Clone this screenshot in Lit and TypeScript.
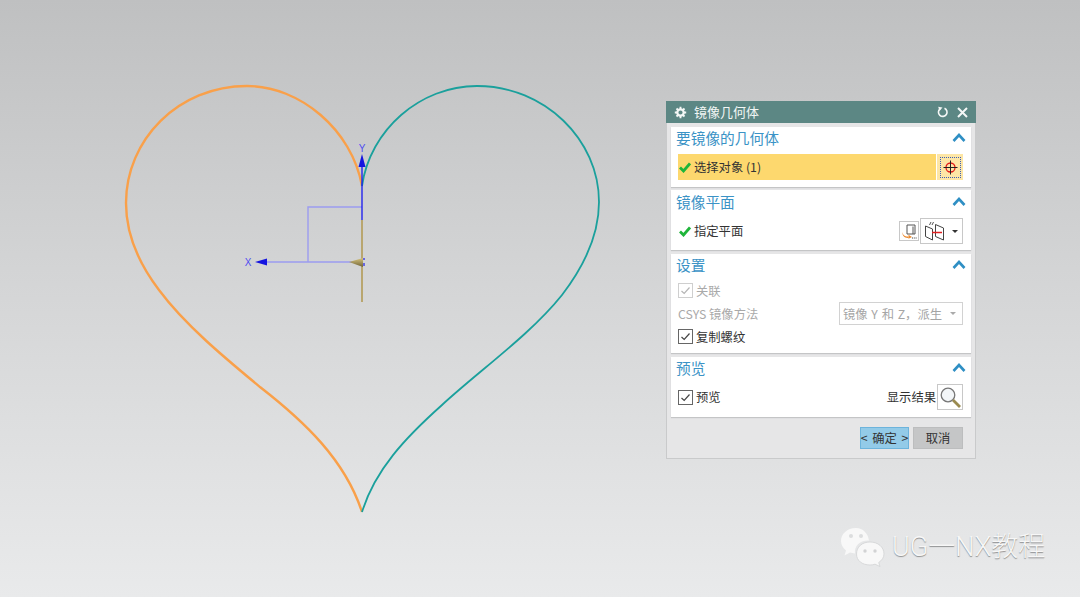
import { LitElement, html, css, svg } from "lit";
import { customElement } from "lit/decorators.js";

const chevron = html`<svg class="chev" width="14" height="9" viewBox="0 0 14 9"><path d="M1.500 8 L7 2 L12.500 8" fill="none" stroke="#2f8fc4" stroke-width="2.600"/></svg>`;
const tick = html`<svg class="tick" width="12" height="11" viewBox="0 0 12 11"><path d="M1 5.500 L4.500 9 L11 1.500" fill="none" stroke="#1fb53a" stroke-width="2.800"/></svg>`;
const box = (off = false) => html`<span class="box ${off ? "off" : ""}"><svg width="13" height="13" viewBox="0 0 13 13"><path d="M2.500 7 L5.200 9.500 L10.500 3.500" fill="none" stroke="${off ? "#b5b5b5" : "#444"}" stroke-width="1.200"/></svg></span>`;

@customElement("app-root")
export class AppRoot extends LitElement {
  static styles = css`
    :host { display: block; width: 1080px; height: 597px; position: relative; overflow: hidden;
      background: linear-gradient(180deg, #bfc0c1 0%, #d3d4d5 45%, #e9eaeb 100%);
      font-family: "Noto Sans CJK SC", "Liberation Sans", sans-serif; color: #333; }
    .canvas { position: absolute; left: 0; top: 0; }
    .axis { font: 10px "Liberation Sans", sans-serif; fill: #4f4ff0; }
    .dialog { position: absolute; left: 666px; top: 101px; width: 310px; height: 358px; box-sizing: border-box;
      background: #e6e6e7; border: 1px solid #c9cacb; border-top: 0; display: flex; flex-direction: column; }
    .head { height: 22px; margin: 0 -1px; background: #5c8784; color: #f2f6f5; font-size: 13px; line-height: 22px;
      display: flex; align-items: center; padding: 0 8px 0 8px; flex: none; }
    .head .name { margin-left: 7px; flex: 1; }
    .head svg { display: block; }
    .head .close { margin-left: 8px; }
    .body { padding: 4px 4px 0; display: flex; flex-direction: column; flex: 1; }
    .sec { background: #fff; box-shadow: 0 1px 1px #c4c5c6; padding: 0 8px 0 7px; flex: none; }
    .s1 { height: 60px; margin-bottom: 3px; }
    .s2 { height: 60px; margin-bottom: 4px; }
    .s3 { height: 99px; margin-bottom: 4px; }
    .s4 { height: 60px; }
    .title { display: flex; align-items: center; justify-content: space-between; height: 27px; color: #3b93c6;
      font-size: 14.700px; margin: 0 -3px 0 -2px; padding-bottom: 6px; box-sizing: border-box; }
    .s2 .title { height: 28px; } .s3 .title { height: 25px; padding-bottom: 5px; }
    .row { display: flex; align-items: center; height: 26px; font-size: 12.300px; }
    .row.short { height: 23px; }
    .tick { margin: 0 3px 0 1px; flex: none; }
    .sel { flex: 1; height: 26px; background: #fdd86e; display: flex; align-items: center; }
    .selbtn { width: 26px; height: 26px; margin-left: 1px; background: #fde6a6; display: flex; align-items: center; justify-content: center; }
    .selbtn .inner { width: 21px; height: 21px; box-sizing: border-box; border: 1px dotted #3d5fb5; display: flex; align-items: center; justify-content: center; }
    .grow { flex: 1; }
    .iconbtn { width: 20px; height: 20px; box-sizing: border-box; border: 1px solid #c8c8c8; display: flex; align-items: center; justify-content: center; margin-right: 1px; }
    .drop { width: 43px; height: 26px; box-sizing: border-box; border: 1px solid #c8c8c8; display: flex; align-items: center; padding-left: 3px; }
    .drop .car { margin-left: 7px; }
    .box { width: 15px; height: 15px; box-sizing: border-box; border: 1px solid #666; display: inline-flex; align-items: center; justify-content: center; margin-right: 3px; flex: none; }
    .box.off { border-color: #cfcfcf; }
    .dis { color: #a9a9a9; }
    .combo { width: 124px; height: 23px; box-sizing: border-box; border: 1px solid #d2d2d2; color: #a5a5a5; display: flex; align-items: center; justify-content: space-between; padding: 0 6px 0 3px; font-size: 12.300px; word-spacing: 1px; white-space: nowrap; }
    .car { width: 0; height: 0; border-left: 3px solid transparent; border-right: 3px solid transparent; border-top: 3px solid #333; flex: none; }
    .combo .car { border-top-color: #aaa; }
    .mag { width: 26px; height: 26px; box-sizing: border-box; border: 1px solid #c8c8c8; margin-left: 1px; display: flex; align-items: center; justify-content: center; }
    .foot { display: flex; justify-content: flex-end; gap: 4px; padding: 10px 8px 0 0; }
    .btn { height: 22px; box-sizing: border-box; display: flex; align-items: center; justify-content: center; font-size: 12.300px; }
    .ok { width: 49px; background: #93cbe8; border: 1px solid #6db4dc; word-spacing: 2px; white-space: nowrap; }
    .cancel { width: 50px; background: #c5c6c7; border: 1px solid #bcbdbe; }
    .mark { position: absolute; left: 840px; top: 527px; display: flex; align-items: center; color: #fff; }
    .mark .txt { margin-left: 7px; font-size: 27px; font-family: "Roboto", "Noto Sans CJK SC", sans-serif; font-weight: 300; line-height: 40px;
      text-shadow: 0 1px 1px #8e8f90; white-space: nowrap; color: #f7f7f7; }
  `;

  private scene() {
    return svg`
      <svg class="canvas" width="1080" height="597" viewBox="0 0 1080 597">
        <defs><linearGradient id="cone" x1="0" y1="0" x2="0" y2="1"><stop offset="0" stop-color="#d8c57e"/><stop offset="1" stop-color="#6f6338"/></linearGradient></defs>
        <path d="M362 186 C352 130 300 86 247 86 C178 86 126 140 126 203 C126 235 140 265 159 290 C185 325 225 358 260 387 C305 422 345 460 362 512" fill="none" stroke="#f9a04a" stroke-width="2.400"/>
        <path d="M362 186 C370 130 420 86 477 86 C545 86 599 140 599 202 C599 235 585 265 562 295 C530 335 480 370 442 405 C405 438 375 470 362 512" fill="none" stroke="#1aa09c" stroke-width="1.800"/>
        <path d="M362 220 V302" stroke="#b9a66f" stroke-width="2"/>
        <path d="M362 207 H308 V262 M267 262 H352" fill="none" stroke="#9c9cf0" stroke-width="1.400"/>
        <path d="M362 166 V220" stroke="#1616f0" stroke-width="1.300"/>
        <path d="M362 154 L365.500 167 H358.500 Z" fill="#1414e0"/>
        <path d="M255 262 L267 258.500 V265.500 Z" fill="#1414e0"/>
        <path d="M349 262 L363 258 V267 Z" fill="url(#cone)"/>
        <path d="M364 258 V260 M364 263 V266" stroke="#3a3ae8" stroke-width="1.400"/>
        <text class="axis" x="362" y="152" text-anchor="middle">Y</text>
        <text class="axis" x="248" y="266" text-anchor="middle">X</text>
      </svg>`;
  }

  render() {
    return html`
      ${this.scene()}
      <div class="dialog">
        <div class="head">
          <svg width="13" height="13" viewBox="0 0 13 13"><circle cx="6.500" cy="6.500" r="3.200" fill="none" stroke="#f4f7f6" stroke-width="2.200"/><path d="M6.500 .8V3M6.500 10V12.200M.8 6.500H3M10 6.500H12.200M2.500 2.500L4 4M9 9L10.500 10.500M2.500 10.500L4 9M9 4L10.500 2.500" stroke="#f4f7f6" stroke-width="1.900"/></svg>
          <span class="name">镜像几何体</span>
          <svg width="12" height="12" viewBox="0 0 12 12"><path d="M7.500 2.200 A4.300 4.300 0 1 1 3 2.800" fill="none" stroke="#f4f7f6" stroke-width="1.600"/><path d="M1.200 .8 L5.500 1.500 L2.500 5 Z" fill="#f4f7f6"/></svg>
          <svg class="close" width="11" height="11" viewBox="0 0 11 11"><path d="M1 1 L10 10 M10 1 L1 10" stroke="#f4f7f6" stroke-width="2"/></svg>
        </div>
        <div class="body">
          <section class="sec s1">
            <div class="title"><span>要镜像的几何体</span>${chevron}</div>
            <div class="row">
              <div class="sel">${tick}<span>选择对象 (1)</span></div>
              <div class="selbtn"><span class="inner">
                <svg width="17" height="17" viewBox="0 0 17 17"><circle cx="8.500" cy="8.500" r="4.500" fill="none" stroke="#e01818" stroke-width="1.300"/><path d="M1.500 8.500H15.500M8.500 1.500V15.500" stroke="#222" stroke-width="1"/></svg>
              </span></div>
            </div>
          </section>
          <section class="sec s2">
            <div class="title"><span>镜像平面</span>${chevron}</div>
            <div class="row">
              ${tick}<span>指定平面</span><span class="grow"></span>
              <span class="iconbtn"><svg width="17" height="17" viewBox="0 0 17 17"><path d="M6 2H14V11H6Z M12 3.500V11" fill="#fff" stroke="#555" stroke-width="1"/><path d="M1.500 9C2 13 5 14 8 13.500L7 11.500L11 14L7 16L8 14.800C4 15.500 1 13 1.500 9Z" fill="#ec8a2e"/><path d="M11 15H16" stroke="#444" stroke-width="1.200" stroke-dasharray="1.200 1"/></svg></span>
              <span class="drop">
                <svg width="21" height="20" viewBox="0 0 21 20"><path d="M1.500 5L8.500 8V19L1.500 15.500Z M11.500 3.500L19.500 7V19L11.500 15.500Z" fill="#fff" stroke="#444" stroke-width="1"/><path d="M7 1L5.500 4M9.500 1L8 4" stroke="#555" stroke-width="1"/><path d="M8 11.500H18" stroke="#e02020" stroke-width="1.500"/></svg>
                <span class="car"></span>
              </span>
            </div>
          </section>
          <section class="sec s3">
            <div class="title"><span>设置</span>${chevron}</div>
            <div class="row short dis">${box(true)}<span>关联</span></div>
            <div class="row short">
              <span class="dis">CSYS 镜像方法</span><span class="grow"></span>
              <span class="combo"><span>镜像 Y 和 Z，派生</span><span class="car"></span></span>
            </div>
            <div class="row short">${box()}<span>复制螺纹</span></div>
          </section>
          <section class="sec s4">
            <div class="title"><span>预览</span>${chevron}</div>
            <div class="row">
              ${box()}<span>预览</span><span class="grow"></span><span>显示结果</span>
              <span class="mag"><svg width="23" height="23" viewBox="0 0 23 23"><circle cx="9" cy="9" r="6.800" fill="#f3f6f8" stroke="#777" stroke-width="1.300"/><path d="M14 14L21 21" stroke="#9a8a50" stroke-width="2.800"/></svg></span>
            </div>
          </section>
          <div class="foot">
            <span class="btn ok">&lt; 确定 &gt;</span>
            <span class="btn cancel">取消</span>
          </div>
        </div>
      </div>
      <div class="mark">
        <svg width="45" height="40" viewBox="0 0 45 40">
          <path d="M16 1C7 1 1 7 1 14C1 18 3 21 6 23.500L4.500 28.500L10 25.500C11.500 26 13 26.300 15 26.400C14 19 20 13 29 13.500C28 6.500 23 1 16 1Z" fill="#f8f8f8"/>
          <circle cx="11" cy="9" r="2" fill="#dcddde"/><circle cx="21" cy="9" r="2" fill="#dcddde"/>
          <path d="M30 15C22 15 16.500 20 16.500 27C16.500 33.500 22 38 30 38C32 38 33.500 37.700 35 37.200L40 39.500L38.700 35.500C41.800 33.500 44 30.500 44 27C44 20 38 15 30 15Z" fill="#f8f8f8" stroke="#d2d3d4" stroke-width=".8"/>
          <circle cx="25" cy="24" r="1.700" fill="#d2d3d4"/><circle cx="35" cy="24" r="1.700" fill="#d2d3d4"/>
        </svg>
        <span class="txt">UG一NX教程</span>
      </div>
    `;
  }
}
